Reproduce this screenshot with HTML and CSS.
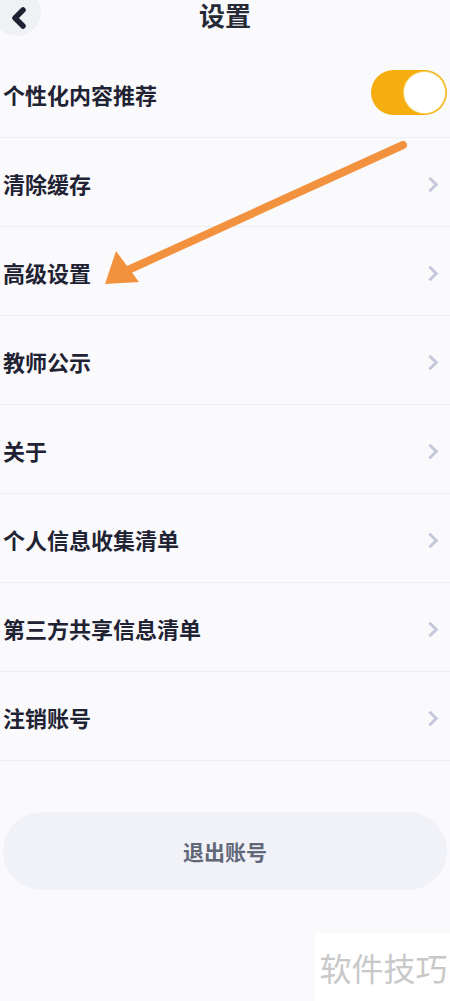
FILE: index.html
```html
<!DOCTYPE html>
<html lang="zh-CN">
<head>
    <meta charset="UTF-8">
    <meta name="viewport" content="width=device-width, initial-scale=1.0">
    <title>设置</title>
    <link rel="stylesheet" href="styles.css">
</head>
<body>
    <div class="page">
        <!-- Header -->
        <div class="header">
            <span class="back">
                <svg width="16" height="22" viewBox="0 0 16 22"><path d="M12 3 L4 11 L12 19" fill="none" stroke="#1e2235" stroke-width="5.5" stroke-linecap="round" stroke-linejoin="round"/></svg>
            </span>
            <h1 class="title">设置</h1>
        </div>

        <!-- Settings list -->
        <div class="list">
            <div class="row">
                <span class="label">个性化内容推荐</span>
                <span class="toggle"><span class="knob"></span></span>
            </div>
            <div class="row"><span class="label">清除缓存</span><span class="chev"></span></div>
            <div class="row"><span class="label">高级设置</span><span class="chev"></span></div>
            <div class="row"><span class="label">教师公示</span><span class="chev"></span></div>
            <div class="row"><span class="label">关于</span><span class="chev"></span></div>
            <div class="row"><span class="label">个人信息收集清单</span><span class="chev"></span></div>
            <div class="row"><span class="label">第三方共享信息清单</span><span class="chev"></span></div>
            <div class="row"><span class="label">注销账号</span><span class="chev"></span></div>
        </div>

        <button class="logout">退出账号</button>

        <!-- Annotation arrow -->
        <svg class="arrow" width="450" height="300" viewBox="0 0 450 300">
            <line x1="403" y1="145" x2="128" y2="270" stroke="#f3923e" stroke-width="8" stroke-linecap="round"/>
            <polygon points="105,284 116,251 139,282" fill="#f3923e"/>
        </svg>

        <div class="watermark">软件技巧</div>
    </div>
</body>
</html>
```

FILE: styles.css
```css
body {
    margin: 0;
    background-color: #fafafc;
    font-family: "Noto Sans CJK SC", "Noto Sans", sans-serif;
    color: #1f2333;
}
.page {
    position: relative;
    width: 450px;
    height: 1001px;
    overflow: hidden;
}
.header {
    height: 49px;
    display: flex;
    justify-content: center;
    align-items: flex-start;
    position: relative;
}
.back {
    position: absolute;
    left: -7px;
    top: -12px;
    width: 48px;
    height: 48px;
    border-radius: 50%;
    background-color: #f0f1f5;
    display: flex;
    align-items: center;
    justify-content: center;
    padding-top: 12px;
    box-sizing: border-box;
    padding-left: 4px;
}
.title {
    margin: 1px 0 0;
    font-size: 26px;
    font-weight: 700;
    line-height: 28px;
    color: #262a36;
}
.row {
    height: 88px;
    border-bottom: 1px solid #eceef2;
    display: flex;
    align-items: center;
    justify-content: space-between;
    padding: 0 4px 0 3px;
}
.label {
    font-size: 22px;
    font-weight: 700;
    line-height: 1;
    padding-top: 2px;
}
.toggle {
    width: 76px;
    height: 45px;
    border-radius: 23px;
    background-color: #f5ad0f;
    display: flex;
    justify-content: flex-end;
    align-items: center;
    padding: 2px;
    box-sizing: border-box;
    margin-right: -1px;
    margin-top: -2px;
}
.knob {
    width: 41px;
    height: 41px;
    border-radius: 50%;
    background-color: #fff;
    box-shadow: 0 0 0 1px #f6d66a;
}
.chev {
    width: 8px;
    height: 8px;
    border-top: 3px solid #c4c8da;
    border-right: 3px solid #c4c8da;
    transform: rotate(45deg);
    margin-right: 10px;
    margin-top: 4px;
}
.logout {
    display: block;
    width: 444px;
    height: 78px;
    margin: 51px 0 0 3px;
    border: none;
    border-radius: 39px;
    background-color: #f0f2f8;
    color: #626778;
    font-family: inherit;
    font-size: 21px;
    font-weight: 700;
}
.arrow {
    position: absolute;
    left: 0;
    top: 0;
    pointer-events: none;
}
.watermark {
    position: absolute;
    right: 0;
    bottom: 0;
    width: 135px;
    height: 68px;
    background-color: #fff;
    color: #c8c8c8;
    font-size: 32px;
    line-height: 68px;
    text-align: center;
    padding-left: 2px;
    box-sizing: border-box;
}
```
